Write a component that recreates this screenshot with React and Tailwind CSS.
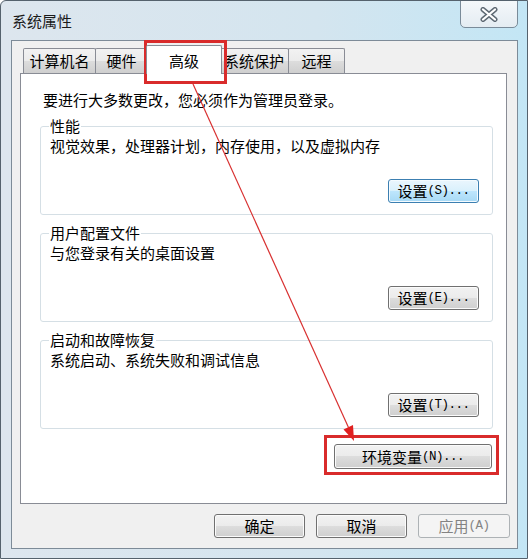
import React from "react";

const BTN_NORMAL =
  "flex items-center justify-center border border-[#707070] rounded-[3px] bg-[linear-gradient(#f2f2f2,#ebebeb_50%,#dddddd_50%,#cfcfcf)] shadow-[inset_0_0_0_1px_#fbfbfb] text-[15px] leading-[20px] text-black";
const BTN_FOCUS =
  "flex items-center justify-center border border-[#3c7fb1] rounded-[3px] bg-[linear-gradient(#eaf6fd,#d9f0fc_50%,#bee6fd_50%,#a7d9f5)] shadow-[inset_0_0_0_1px_#f4fbff] text-[15px] leading-[20px] text-black";
const BTN_DISABLED =
  "flex items-center justify-center border border-[#adb2b5] rounded-[3px] bg-[#f4f4f4] text-[15px] leading-[20px] text-[#838383]";

function Acc({ k }) {
  return (
    <span className="font-['Liberation_Mono',monospace] text-[12.5px] tracking-[-0.5px]">
      ({k})...
    </span>
  );
}

function Group({ title, desc, btn, first }) {
  return (
    <div className="flex flex-col h-[89px] border border-[#d5dfe5] rounded-[3px]">
      <div className="-mt-[11px] ml-[8px] px-[1px] w-fit bg-white leading-[20px] text-[15px]">
        {title}
      </div>
      <div className="ml-[9px] leading-[20px] text-[15px]">{desc}</div>
      <div className="mt-auto mb-[11px] mr-[13px] flex justify-end">
        <div className={`${first ? BTN_FOCUS : BTN_NORMAL} w-[91px] h-[24px]`}>
          <span>设置</span>
          <Acc k={btn} />
        </div>
      </div>
    </div>
  );
}

const TAB =
  "flex items-center justify-center h-[25px] border border-b-0 border-[#898c95] rounded-t-[2px] bg-[linear-gradient(#f2f2f2,#ebebeb_50%,#dddddd_50%,#cfcfcf)] text-[15px] leading-[20px] -ml-px first:ml-0";

export default function App() {
  return (
    <div className="relative w-[528px] h-[559px] overflow-hidden border border-[#55626d] rounded-tl-[6px] font-['Noto_Sans_CJK_SC',sans-serif] text-black bg-[linear-gradient(90deg,#dde6ee,#d4e5ef_60%,#c3e6f5)]">
      {/* Title bar */}
      <div className="flex justify-between h-[39px] pl-[11px] pr-[9px]">
        <div className="pt-[10px] text-[15px] leading-[20px] text-[#1a1a1a]">系统属性</div>
        <div className="-mt-[3px] w-[58px] h-[30px] border border-[#7a8b99] rounded-b-[5px] bg-[linear-gradient(#f6f9fb,#e4ecf2)] flex items-center justify-center pt-[3px]">
          <svg width="18" height="15" viewBox="0 0 18 15">
            <path d="M3 2.5 L15 12.5 M15 2.5 L3 12.5" stroke="#5f6a74" strokeWidth="5" strokeLinecap="round" />
            <path d="M3 2.5 L15 12.5 M15 2.5 L3 12.5" stroke="#ffffff" strokeWidth="2.2" strokeLinecap="round" />
          </svg>
        </div>
      </div>

      {/* Dialog body */}
      <div className="ml-[10px] w-[507px] h-[509px] border border-[#7d8b98] bg-[#f0f0f0] flex flex-col pl-[8px] pr-[10px] pt-[4px]">
        {/* Tabs */}
        <div className="flex items-end h-[28px] pl-[3px]">
          <div className={`${TAB} w-[73px]`}>计算机名</div>
          <div className={`${TAB} w-[53px]`}>硬件</div>
          <div className="relative z-10 -mx-[2px] -mb-px flex items-start justify-center pt-[5px] w-[76px] h-[29px] border border-b-0 border-[#898c95] rounded-t-[2px] bg-white text-[15px] leading-[20px]">
            高级
          </div>
          <div className={`${TAB} w-[70px]`}>系统保护</div>
          <div className={`${TAB} w-[57px]`}>远程</div>
        </div>

        {/* Panel */}
        <div className="flex flex-col h-[431px] border border-[#898c95] bg-white">
          <div className="mt-[16px] ml-[22px] text-[15px] leading-[20px]">
            要进行大多数更改，您必须作为管理员登录。
          </div>
          <div className="flex flex-col ml-[19px] mr-[13px] mt-[16px]">
            <Group title="性能" desc="视觉效果，处理器计划，内存使用，以及虚拟内存" btn="S" first />
            <div className="h-[18px]" />
            <Group title="用户配置文件" desc="与您登录有关的桌面设置" btn="E" />
            <div className="h-[18px]" />
            <Group title="启动和故障恢复" desc="系统启动、系统失败和调试信息" btn="T" />
            <div className="mt-[15px] mr-[1px] flex justify-end">
              <div className={`${BTN_NORMAL} w-[158px] h-[25px]`}>
                <span>环境变量</span>
                <Acc k="N" />
              </div>
            </div>
          </div>
        </div>

        {/* Bottom buttons */}
        <div className="mt-[10px] -mr-[3px] flex justify-end gap-[11px]">
          <div className={`${BTN_NORMAL} w-[91px] h-[24px]`}>确定</div>
          <div className={`${BTN_NORMAL} w-[91px] h-[24px]`}>取消</div>
          <div className={`${BTN_DISABLED} w-[92px] h-[24px]`}>
            <span>应用</span>
            <span className="font-['Liberation_Mono',monospace] text-[12.5px] tracking-[-0.5px]">(A)</span>
          </div>
        </div>
      </div>

      {/* Annotation overlay */}
      <svg
        className="absolute -left-px -top-px pointer-events-none"
        width="528"
        height="559"
        viewBox="0 0 528 559"
      >
        <rect x="145.5" y="41.5" width="80" height="41" fill="none" stroke="#d92b2b" strokeWidth="3" />
        <rect x="325.5" y="436.5" width="172" height="37" fill="none" stroke="#d92b2b" strokeWidth="3" />
        <line x1="193" y1="84" x2="348.5" y2="427.5" stroke="#d83030" strokeWidth="1.2" />
        <polygon points="354,441 343.5,429.5 353,425" fill="#e02020" />
      </svg>
    </div>
  );
}
